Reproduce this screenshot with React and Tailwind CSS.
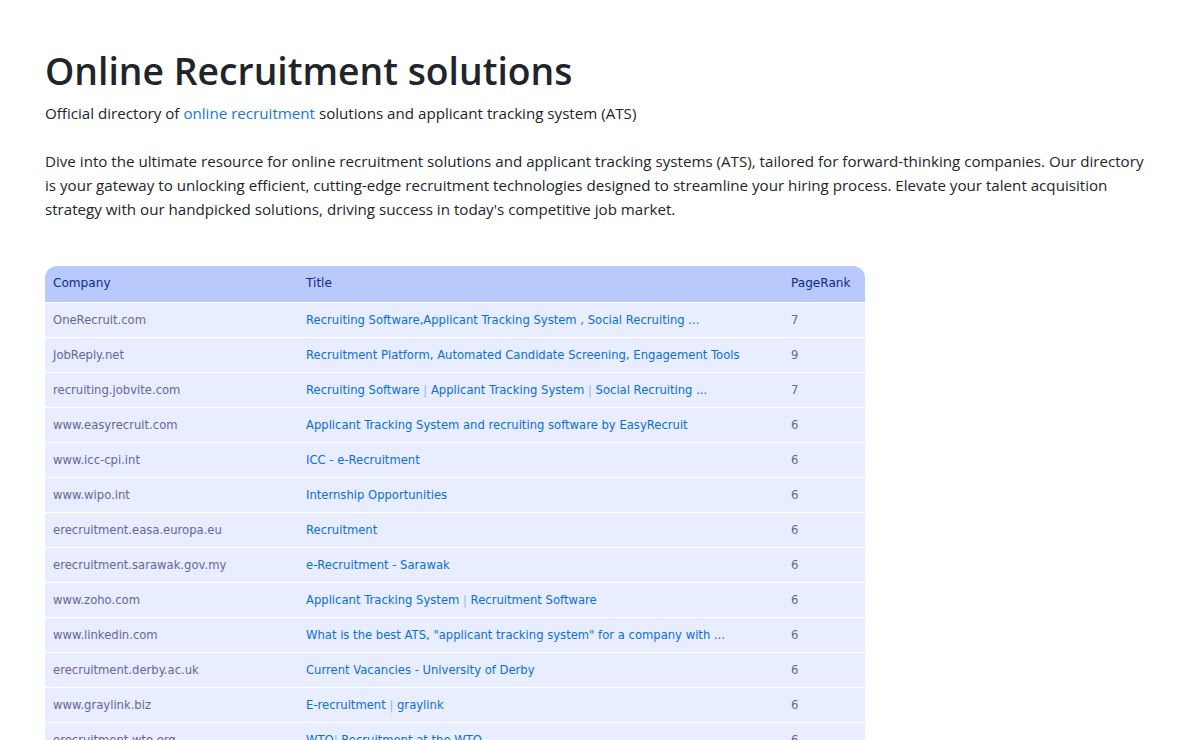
const rows = [
  ["OneRecruit.com", "Recruiting Software,Applicant Tracking System , Social Recruiting ...", 7],
  ["JobReply.net", "Recruitment Platform, Automated Candidate Screening, Engagement Tools", 9],
  ["recruiting.jobvite.com", "Recruiting Software | Applicant Tracking System | Social Recruiting ...", 7],
  ["www.easyrecruit.com", "Applicant Tracking System and recruiting software by EasyRecruit", 6],
  ["www.icc-cpi.int", "ICC - e-Recruitment", 6],
  ["www.wipo.int", "Internship Opportunities", 6],
  ["erecruitment.easa.europa.eu", "Recruitment", 6],
  ["erecruitment.sarawak.gov.my", "e-Recruitment - Sarawak", 6],
  ["www.zoho.com", "Applicant Tracking System | Recruitment Software", 6],
  ["www.linkedin.com", 'What is the best ATS, "applicant tracking system" for a company with ...', 6],
  ["erecruitment.derby.ac.uk", "Current Vacancies - University of Derby", 6],
  ["www.graylink.biz", "E-recruitment | graylink", 6],
  ["erecruitment.wto.org", "WTO| Recruitment at the WTO", 6],
];

// the separators in titles are paler than the link text
function Title({ text }) {
  const parts = text.split("|");
  return (
    <a href="#" className="text-[#0b6fd6]">
      {parts.map((part, i) => (
        <span key={i}>
          {i > 0 && <span className="text-[#8fb4e8]">|</span>}
          {part}
        </span>
      ))}
    </a>
  );
}

export default function App() {
  return (
    <div className="h-screen overflow-hidden bg-white px-[45px] pt-[47px] font-['Open_Sans','Noto_Sans',sans-serif] text-[#212529]">
      {/* Header */}
      <h1 className="text-[37.3px] leading-[48px] font-semibold">Online Recruitment solutions</h1>
      <p className="mt-[6px] text-[15.15px] leading-6">
        Official directory of <a href="#" className="text-[#1a73e0]">online recruitment</a> solutions and applicant tracking system (ATS)
      </p>
      <p className="mt-6 text-[15.15px] leading-6">
        Dive into the ultimate resource for online recruitment solutions and applicant tracking systems (ATS), tailored for forward-thinking companies. Our directory is your gateway to unlocking efficient, cutting-edge recruitment technologies designed to streamline your hiring process. Elevate your talent acquisition strategy with our handpicked solutions, driving success in today's competitive job market.
      </p>

      {/* Table */}
      <table className="mt-[45px] w-[820px] table-fixed border-separate border-spacing-0 font-['DejaVu_Sans',sans-serif] text-[11.6px]">
        <thead>
          <tr className="bg-[#b9c9fb] text-[#0a2a8c]">
            <th className="h-[37px] w-[253px] rounded-tl-xl border-b border-white px-2 pb-[2px] text-left text-[12.1px] font-normal">Company</th>
            <th className="h-[37px] w-[485px] border-b border-white px-2 pb-[2px] text-left text-[12.1px] font-normal">Title</th>
            <th className="h-[37px] rounded-tr-xl border-b border-white px-2 pb-[2px] text-left text-[12.1px] font-normal">PageRank</th>
          </tr>
        </thead>
        <tbody>
          {rows.map((row) => (
            <tr key={row[0]} className="bg-[#e8edff] text-[#666699]">
              <td className="h-[35px] border-b border-white px-2 pt-[2px]">{row[0]}</td>
              <td className="h-[35px] border-b border-white px-2 pt-[2px]"><Title text={row[1]} /></td>
              <td className="h-[35px] border-b border-white px-2 pt-[2px]">{row[2]}</td>
            </tr>
          ))}
        </tbody>
      </table>
    </div>
  );
}
